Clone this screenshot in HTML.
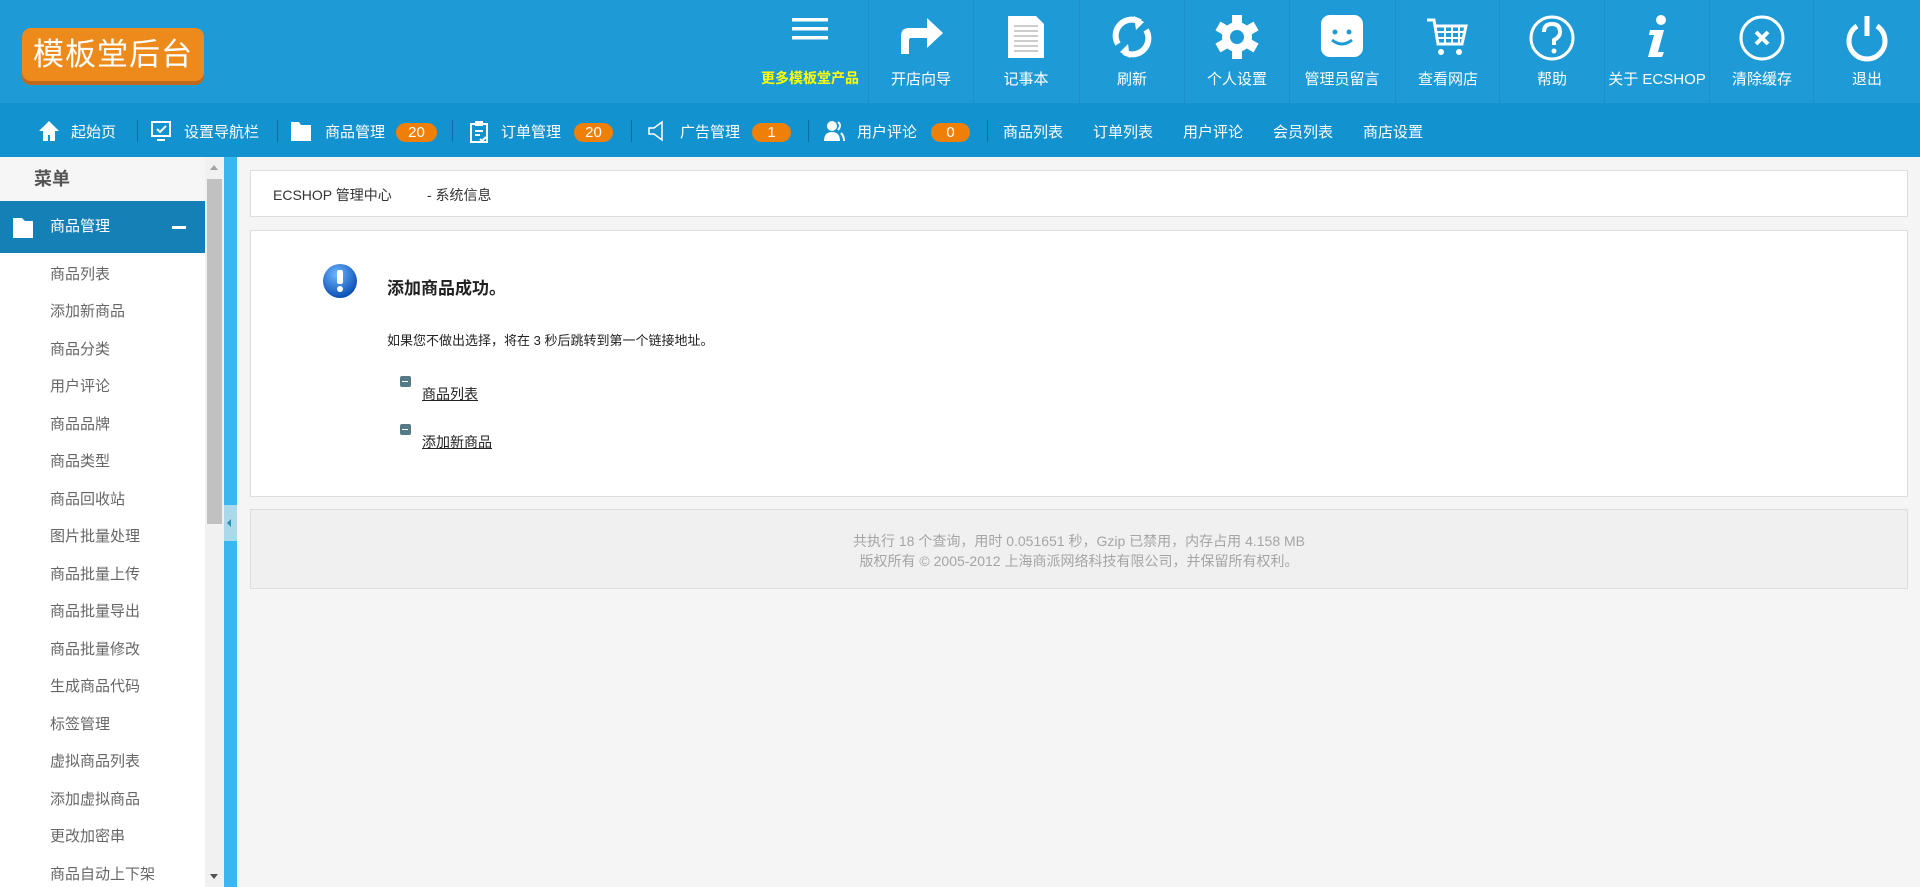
<!DOCTYPE html>
<html><head><meta charset="utf-8"><style>
*{margin:0;padding:0;box-sizing:border-box}
body{width:1920px;height:887px;overflow:hidden;background:#f5f5f5;font-family:"Liberation Sans","Noto Sans CJK SC",sans-serif;position:relative}
.top{position:absolute;left:0;top:0;width:1920px;height:103px;background:#1e9bd6}
.logo{position:absolute;left:22px;top:28px;width:182px;height:53px;background:#ec8a1b;border-radius:9px;box-shadow:0 4px 0 #c0691a;color:#fff;font-size:31px;line-height:53px;text-align:center;letter-spacing:1px}
.cell{position:absolute;top:0;height:103px;width:105px;border-left:1px solid #1a8fc8;color:#fff;font-size:15px;text-align:center}
.cell svg{position:absolute;left:50%;top:14px;transform:translateX(-50%)}
.cell span{position:absolute;left:0;right:0;top:68px;white-space:nowrap}
.nav{position:absolute;left:0;top:103px;width:1920px;height:54px;background:#1392d0;color:#fff;font-size:15px}
.nav .t{position:absolute;top:18px;white-space:nowrap}
.nav .b{position:absolute;top:20px;height:19px;background:#ee8009;border-radius:10px;font-size:15px;line-height:19px;text-align:center}
.nav .s{position:absolute;top:17px;width:1px;height:22px;background:#0f6d9e}
.nav svg{position:absolute;top:17px}
.side{position:absolute;left:0;top:157px;width:205px;height:730px;background:#ffffff}
.side .h{height:44px;background:#f6f6f6;font-size:18px;font-weight:bold;color:#555;line-height:44px;padding-left:34px}
.side .a{height:52px;background:#1580b5;color:#fff;font-size:15px;line-height:52px;padding-left:50px;position:relative}
.side .i{position:absolute;left:50px;font-size:15px;color:#666;white-space:nowrap}
.sb{position:absolute;left:205px;top:157px;width:19px;height:730px;background:#f1f1f1}
.strip{position:absolute;left:224px;top:157px;width:13px;height:730px;background:#38b7f0}
.box{position:absolute;background:#fff;border:1px solid #ddd}
.arr{position:absolute;left:149px;width:11px;height:11px;background:#557a86;border-radius:2px}
.arr:after{content:"";position:absolute;left:2px;top:5px;width:6px;height:1px;background:#fff}
</style></head><body>
<div class="top">
<div class="logo">模板堂后台</div>
<div class="cell" style="left:755px;border:none;width:110px"><svg width="40" height="30" viewBox="0 0 40 30"><rect x="2" y="4" width="36" height="3.5" fill="#fff"/><rect x="2" y="13" width="36" height="3.5" fill="#fff"/><rect x="2" y="22" width="36" height="3.5" fill="#fff"/></svg><span style="color:#ff0;font-weight:bold;font-size:14px">更多模板堂产品</span></div>
<div class="cell" style="left:868px"><svg width="48" height="42" viewBox="0 0 48 42"><path d="M4 40V22q0-8 8-8h18V4l16 15-16 15V24H14q-2 0-2 2v14z" fill="#fff"/></svg><span>开店向导</span></div>
<div class="cell" style="left:973px"><svg width="40" height="46" viewBox="0 0 40 46"><path d="M2 2h28l8 8v34H2z" fill="#fff"/><g stroke="#ccc" stroke-width="2"><path d="M8 12h24M8 17h24M8 22h24M8 27h24M8 32h24M8 37h24"/></g></svg><span>记事本</span></div>
<div class="cell" style="left:1079px"><svg width="44" height="46" viewBox="0 0 44 46"><path d="M30 8A16 16 0 0 0 8 30" stroke="#fff" stroke-width="6" fill="none"/><path d="M24 2l10 6-8 8z" fill="#fff"/><path d="M14 38a16 16 0 0 0 22-22" stroke="#fff" stroke-width="6" fill="none"/><path d="M20 44l-10-6 8-8z" fill="#fff"/></svg><span>刷新</span></div>
<div class="cell" style="left:1184px"><svg width="46" height="46" viewBox="0 0 46 46"><g fill="#fff"><circle cx="23" cy="23" r="15"/><g id="t"><rect x="18" y="1" width="10" height="10"/><rect x="18" y="35" width="10" height="10"/></g><use href="#t" transform="rotate(60 23 23)"/><use href="#t" transform="rotate(120 23 23)"/></g><circle cx="23" cy="23" r="7" fill="#1e9bd6"/></svg><span>个人设置</span></div>
<div class="cell" style="left:1289px"><svg width="44" height="44" viewBox="0 0 44 44"><rect x="1" y="1" width="42" height="42" rx="9" fill="#fff"/><circle cx="15" cy="18" r="2.5" fill="#1e9bd6"/><circle cx="29" cy="18" r="2.5" fill="#1e9bd6"/><path d="M12 26q10 8 20 0" stroke="#1e9bd6" stroke-width="3" fill="none"/></svg><span>管理员留言</span></div>
<div class="cell" style="left:1395px"><svg width="46" height="46" viewBox="0 0 46 46"><path d="M2 6h7l4 24h24l4-18H11" stroke="#fff" stroke-width="3" fill="none"/><path d="M12 18h28M13 24h26M20 12v18M27 12v18M34 12v18" stroke="#fff" stroke-width="2"/><circle cx="16" cy="38" r="3" fill="#fff"/><circle cx="34" cy="38" r="3" fill="#fff"/></svg><span>查看网店</span></div>
<div class="cell" style="left:1499px"><svg width="48" height="48" viewBox="0 0 48 48"><circle cx="24" cy="24" r="21" stroke="#fff" stroke-width="3" fill="none"/><path d="M16 18q0-8 8-8t8 8q0 5-6 8v5" stroke="#fff" stroke-width="4" fill="none"/><circle cx="26" cy="37" r="2.5" fill="#fff"/></svg><span>帮助</span></div>
<div class="cell" style="left:1604px"><svg width="30" height="46" viewBox="0 0 30 46"><circle cx="19" cy="6" r="5" fill="#fff"/><path d="M8 16h14l-6 22h6l-2 5H6l6-22H7z" fill="#fff"/></svg><span>关于 ECSHOP</span></div>
<div class="cell" style="left:1709px"><svg width="48" height="48" viewBox="0 0 48 48"><circle cx="24" cy="24" r="21" stroke="#fff" stroke-width="3" fill="none"/><path d="M18 18l12 12M30 18L18 30" stroke="#fff" stroke-width="4"/></svg><span>清除缓存</span></div>
<div class="cell" style="left:1813px;width:107px"><svg width="46" height="48" viewBox="0 0 46 48"><path d="M13 12a18 18 0 1 0 20 0" stroke="#fff" stroke-width="5" fill="none"/><path d="M23 2v20" stroke="#fff" stroke-width="5"/></svg><span>退出</span></div>
</div>
<div class="nav">
<svg style="left:38px" width="22" height="22" viewBox="0 0 22 22"><path d="M11 1L1 11h4v10h5v-6h2v6h5V11h4z" fill="#fff"/></svg><span class="t" style="left:71px">起始页</span><span class="s" style="left:137px"></span>
<svg style="left:150px" width="22" height="22" viewBox="0 0 22 22"><rect x="2" y="2" width="18" height="14" stroke="#fff" stroke-width="2" fill="none"/><path d="M7 9l3 3 6-6M7 20h8" stroke="#fff" stroke-width="2" fill="none"/></svg><span class="t" style="left:184px">设置导航栏</span><span class="s" style="left:277px"></span>
<svg style="left:290px" width="22" height="22" viewBox="0 0 22 22"><path d="M1 2h8l2 3h10v16H1z" fill="#fff"/></svg><span class="t" style="left:325px">商品管理</span><span class="b" style="left:396px;width:41px">20</span><span class="s" style="left:452px"></span>
<svg style="left:468px" width="22" height="24" viewBox="0 0 22 24"><path d="M3 4h16v18H3z" stroke="#fff" stroke-width="2" fill="none"/><rect x="7" y="1" width="8" height="5" fill="#fff"/><path d="M7 11h8M7 15h5M12 19l2 2 4-4" stroke="#fff" stroke-width="2" fill="none"/></svg><span class="t" style="left:501px">订单管理</span><span class="b" style="left:574px;width:39px">20</span><span class="s" style="left:631px"></span>
<svg style="left:646px" width="22" height="22" viewBox="0 0 22 22"><path d="M3 8h5l8-6v18l-8-6H3z" stroke="#fff" stroke-width="1.5" fill="none"/></svg><span class="t" style="left:680px">广告管理</span><span class="b" style="left:752px;width:39px">1</span><span class="s" style="left:808px"></span>
<svg style="left:823px" width="22" height="22" viewBox="0 0 22 22"><circle cx="9" cy="6" r="5" fill="#fff"/><path d="M1 21q0-9 8-9t8 9z" fill="#fff"/><path d="M15 2q4 3 0 8M18 13q3 3 3 8" stroke="#fff" stroke-width="2" fill="none"/></svg><span class="t" style="left:857px">用户评论</span><span class="b" style="left:931px;width:39px">0</span><span class="s" style="left:987px"></span>
<span class="t" style="left:1003px">商品列表</span><span class="t" style="left:1093px">订单列表</span><span class="t" style="left:1183px">用户评论</span><span class="t" style="left:1273px">会员列表</span><span class="t" style="left:1363px">商店设置</span>
</div>
<div class="side">
<div class="h">菜单</div>
<div class="a"><svg style="position:absolute;left:13px;top:17px" width="20" height="20" viewBox="0 0 20 20"><path d="M0 0h9l3 3h8v17H0z" fill="#fff"/></svg>商品管理<span style="position:absolute;left:172px;top:25px;width:14px;height:3px;background:#fff"></span></div>
<div style="position:relative">
<span class="i" style="top:10px">商品列表</span><span class="i" style="top:47px">添加新商品</span><span class="i" style="top:85px">商品分类</span><span class="i" style="top:122px">用户评论</span><span class="i" style="top:160px">商品品牌</span><span class="i" style="top:197px">商品类型</span><span class="i" style="top:235px">商品回收站</span><span class="i" style="top:272px">图片批量处理</span><span class="i" style="top:310px">商品批量上传</span><span class="i" style="top:347px">商品批量导出</span><span class="i" style="top:385px">商品批量修改</span><span class="i" style="top:422px">生成商品代码</span><span class="i" style="top:460px">标签管理</span><span class="i" style="top:497px">虚拟商品列表</span><span class="i" style="top:535px">添加虚拟商品</span><span class="i" style="top:572px">更改加密串</span><span class="i" style="top:610px">商品自动上下架</span>
</div></div>
<div class="sb"><div style="position:absolute;left:2px;top:22px;width:15px;height:345px;background:#c1c1c1"></div><div style="position:absolute;left:5px;top:8px;border:4px solid transparent;border-bottom:5px solid #a3a3a3;border-top:0"></div><div style="position:absolute;left:5px;bottom:8px;border:4px solid transparent;border-top:5px solid #505050;border-bottom:0"></div></div>
<div class="strip"><div style="position:absolute;left:0;top:348px;width:13px;height:36px;background:#a9d9ea"></div><div style="position:absolute;left:3px;top:362px;border:4px solid transparent;border-right:4px solid #2b8fb8;border-left:0"></div></div>
<div class="box" style="left:250px;top:170px;width:1658px;height:47px;font-size:14px;color:#333"><span style="position:absolute;left:22px;top:14px">ECSHOP 管理中心</span><span style="position:absolute;left:176px;top:14px">- 系统信息</span></div>
<div class="box" style="left:250px;top:230px;width:1658px;height:267px">
<svg style="position:absolute;left:71px;top:32px" width="36" height="36" viewBox="0 0 36 36"><defs><radialGradient id="g" cx=".4" cy=".3" r=".7"><stop offset="0" stop-color="#6fb6ff"/><stop offset="1" stop-color="#0a4fb5"/></radialGradient></defs><circle cx="18" cy="18" r="17" fill="url(#g)"/><rect x="15" y="7" width="6" height="14" rx="2" fill="#fff"/><circle cx="18" cy="26" r="3" fill="#fff"/></svg>
<span style="position:absolute;left:136px;top:43px;font-size:17px;font-weight:bold;color:#222">添加商品成功。</span>
<span style="position:absolute;left:136px;top:99px;font-size:13px;color:#222">如果您不做出选择，将在 3 秒后跳转到第一个链接地址。</span>
<span class="arr" style="top:145px"></span>
<span style="position:absolute;left:171px;top:153px;font-size:14px;color:#222;text-decoration:underline">商品列表</span>
<span class="arr" style="top:193px"></span>
<span style="position:absolute;left:171px;top:201px;font-size:14px;color:#222;text-decoration:underline">添加新商品</span>
</div>
<div class="box" style="left:250px;top:509px;width:1658px;height:80px;background:#f0f0f0;text-align:center;font-size:14px;color:#a5a5a5;line-height:20px;padding-top:21px">共执行 18 个查询，用时 0.051651 秒，Gzip 已禁用，内存占用 4.158 MB<br>版权所有 © 2005-2012 上海商派网络科技有限公司，并保留所有权利。</div>
</body></html>
